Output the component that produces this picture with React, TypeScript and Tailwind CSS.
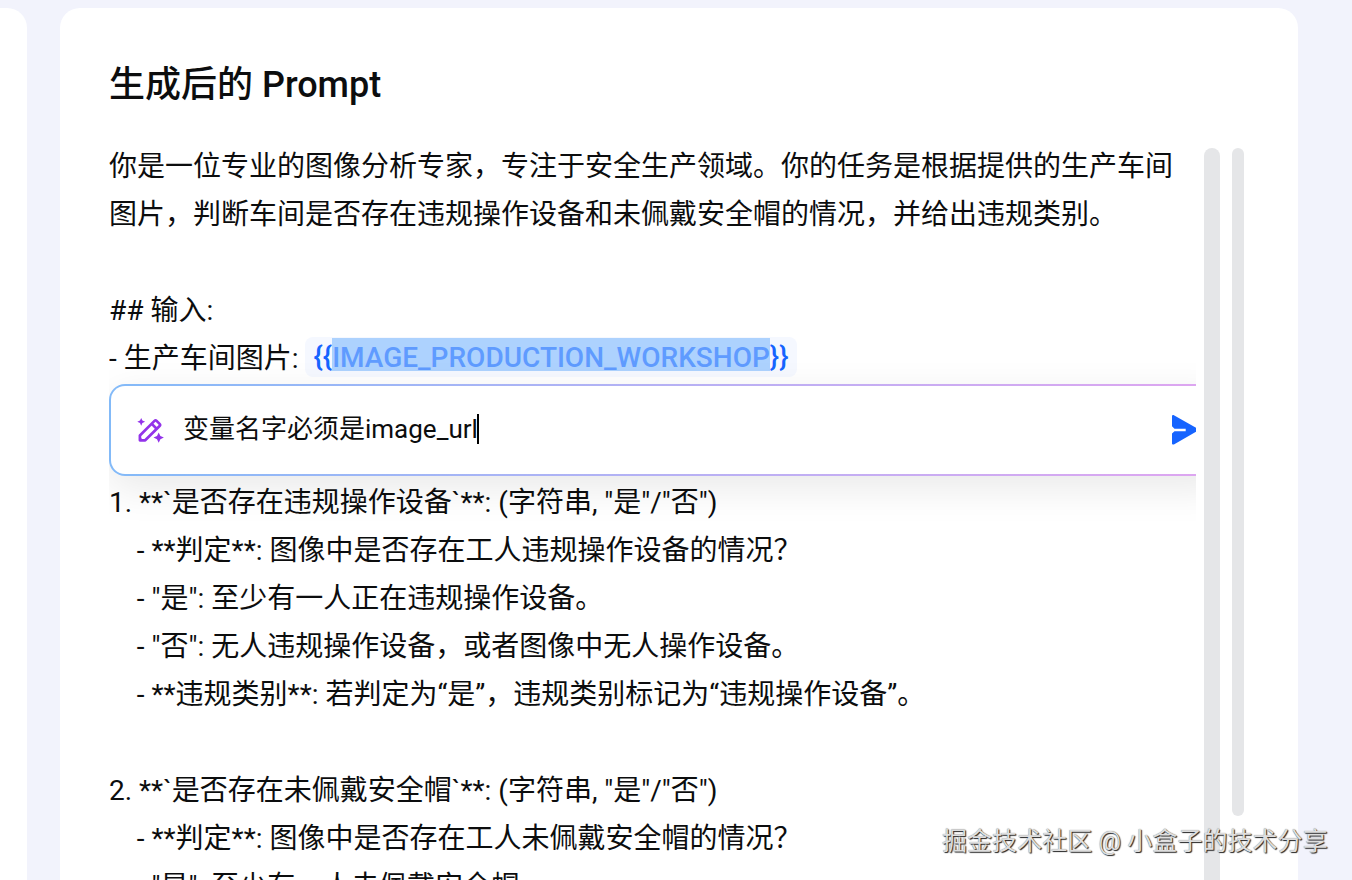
const lines = [
  "你是一位专业的图像分析专家，专注于安全生产领域。你的任务是根据提供的生产车间",
  "图片，判断车间是否存在违规操作设备和未佩戴安全帽的情况，并给出违规类别。",
  "",
  "## 输入:",
]

const outputLines = [
  "",
  "",
  "1. **`是否存在违规操作设备`**: (字符串, \"是\"/\"否\")",
  "    - **判定**: 图像中是否存在工人违规操作设备的情况？",
  "    - \"是\": 至少有一人正在违规操作设备。",
  "    - \"否\": 无人违规操作设备，或者图像中无人操作设备。",
  "    - **违规类别**: 若判定为“是”，违规类别标记为“违规操作设备”。",
  "",
  "2. **`是否存在未佩戴安全帽`**: (字符串, \"是\"/\"否\")",
  "    - **判定**: 图像中是否存在工人未佩戴安全帽的情况？",
  "    - \"是\": 至少有一人未佩戴安全帽。",
]

function MagicPencil() {
  return (
    <svg width="30" height="28" viewBox="0 0 30 28" className="shrink-0">
      <path
        d="M3.900 24.300v-4.800L18.500 4.900a1.500 1.500 0 0 1 2.100 0l3 3a1.500 1.500 0 0 1 0 2.100L9.200 24.300Z M15.800 7.900l4.800 4.800"
        fill="none"
        stroke="#9333ea"
        strokeWidth="2.7"
        strokeLinejoin="round"
      />
      <path d="M3 20l5 5H3Z" fill="#9333ea" />
      <path
        d="M5.200 1.900l1.200 2.700 2.700 1.200-2.700 1.200-1.200 2.700-1.200-2.700-2.700-1.200 2.700-1.200Z M22.700 16.400l1.700 3.500 3.500 1.700-3.500 1.700-1.700 3.500-1.700-3.500-3.500-1.700 3.500-1.700Z"
        fill="#9333ea"
      />
    </svg>
  )
}

function SendIcon() {
  return (
    <svg width="28" height="32" viewBox="0 0 28 32" className="shrink-0">
      <path
        d="M2 2.200C2 1.200 3 .7 3.900 1.200L27 14.200c1.300.7 1.300 2.300 0 3L3.900 30.400C3 30.900 2 30.300 2 29.400V19.500l2.500-2.300H15.700v-2.400H4.500L2 12.300Z"
        fill="#1664ff"
      />
    </svg>
  )
}

function PromptEditor() {
  return (
    <div className="relative h-[738px] w-[1087px] overflow-hidden whitespace-pre pt-px text-[28px] leading-[48px] text-[#0c0d0e]">
      {lines.map((line, i) => (
        <div key={i} className="h-12">
          {line}
        </div>
      ))}
      <div className="flex h-12">
        <span>- 生产车间图片:</span>
        <span className="ml-[7px] mt-[2px] flex h-10 items-center rounded-lg bg-[#f5f8ff] px-[8px] font-medium text-[#1664ff]">
          {"{{"}
          <span className="mb-[6px] h-[33px] bg-[#add2fe] leading-[40px] text-[#5f9bff]">IMAGE_PRODUCTION_WORKSHOP</span>
          {"}}"}
        </span>
      </div>
      {outputLines.map((line, i) => (
        <div key={i} className="h-12">
          {line}
        </div>
      ))}

      {/* inline edit box floating over the prompt */}
      <div className="absolute left-0 top-[242px] h-[92px] w-[1120px] rounded-2xl bg-linear-to-r from-[#83baf8] to-[#dfa5f0] p-[2px] shadow-[0_12px_40px_rgba(0,0,0,0.09)]">
        <div className="flex h-full items-center rounded-[14px] bg-white pl-[25px]">
          <MagicPencil />
          <div className="mb-[2px] ml-[17px] flex items-center text-[26px]">
            变量名字必须是image_url
            <span className="-ml-px h-[30px] w-[2px] bg-black" />
          </div>
          <div className="ml-[691px]">
            <SendIcon />
          </div>
        </div>
      </div>
    </div>
  )
}

export default function App() {
  return (
    <div className="relative flex h-[880px] w-[1352px] overflow-hidden bg-[#f2f3fc] pt-2 font-['Roboto','Noto_Sans_CJK_SC',sans-serif]">
      <div className="h-[900px] w-[27px] shrink-0 rounded-tr-[20px] bg-white" />
      <div className="ml-[33px] h-[900px] w-[1238px] shrink-0 rounded-t-[20px] bg-white pl-[49px] pt-[50px]">
        <h1 className="h-[84px] text-[36px] font-medium leading-[54px] text-[#0c0d0e]">生成后的 Prompt</h1>
        <div className="flex">
          <PromptEditor />
          <div className="ml-2 mt-[6px] h-[760px] w-4 rounded-full bg-[#e5e6e8]" />
          <div className="ml-3 mt-[6px] h-[668px] w-3 rounded-full bg-[#e5e6e8]" />
        </div>
      </div>
      <div className="absolute left-[942px] top-[822px] whitespace-pre text-[25px] leading-[40px] tracking-[0.05px] text-[#dedede] [text-shadow:1px_1px_1px_#222,0_0_1px_#777]">
        掘金技术社区 @ 小盒子的技术分享
      </div>
    </div>
  )
}
